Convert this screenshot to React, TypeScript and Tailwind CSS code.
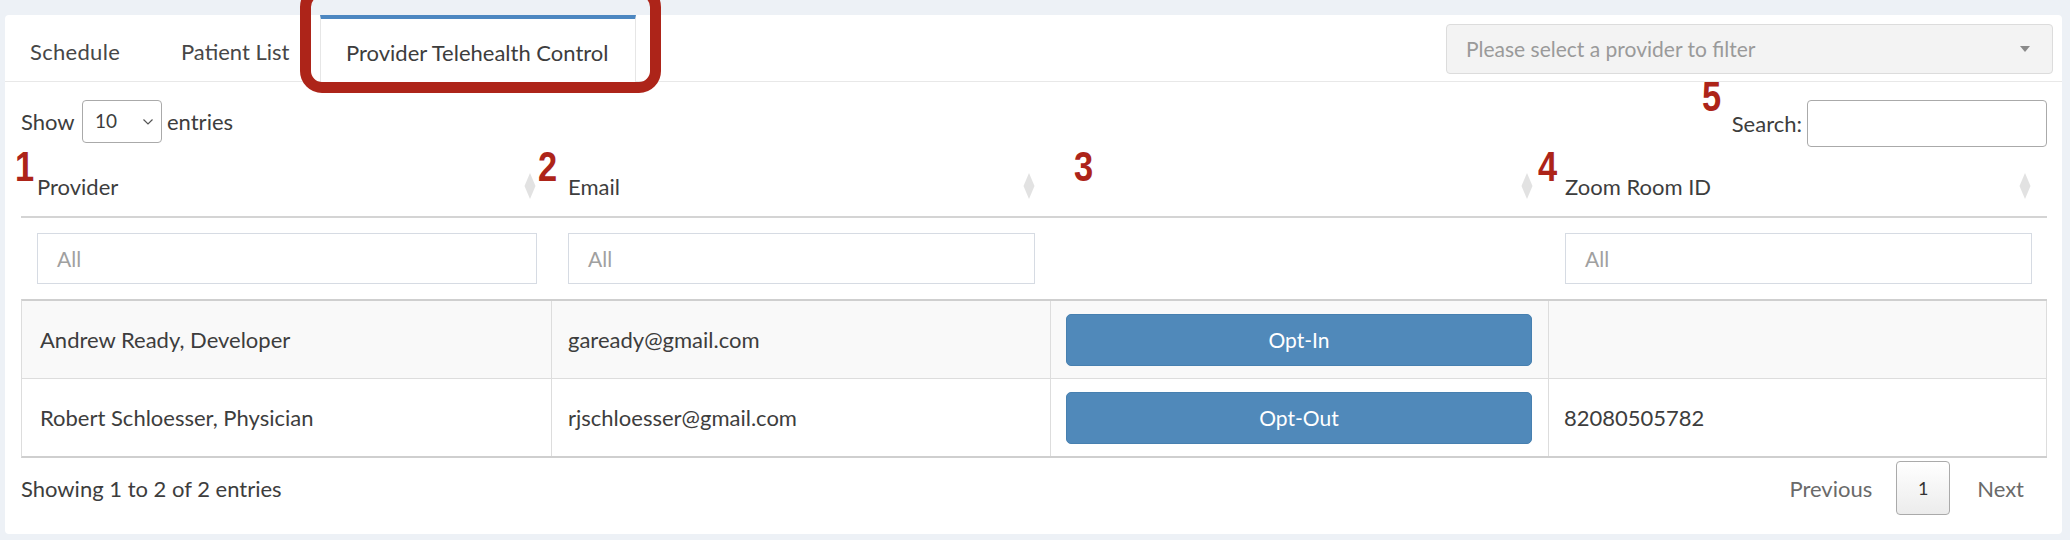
import React from "react";

const rows = [
  { name: "Andrew Ready, Developer", email: "gaready@gmail.com", action: "Opt-In", room: "" },
  { name: "Robert Schloesser, Physician", email: "rjschloesser@gmail.com", action: "Opt-Out", room: "82080505782" },
];

function SortIcon() {
  return (
    <svg width="12" height="26" viewBox="0 0 12 26" className="shrink-0">
      <path d="M6 0 L11.5 13 L6 26 L0.5 13 Z" fill="#e2e2e2" />
    </svg>
  );
}

function Mark({ n, className }: { n: string; className: string }) {
  return (
    <span
      className={`absolute text-[42px] leading-none font-bold text-[#ad2419] font-['Liberation_Sans_Narrow','Liberation_Sans',sans-serif] scale-x-[0.82] origin-left pointer-events-none ${className}`}
    >
      {n}
    </span>
  );
}

export default function App() {
  return (
    <div className="w-[2070px] h-[540px] bg-[#edf1f6] pl-[5px] pr-[8px] pt-[15px] pb-[6px] font-['Lato',sans-serif] text-[#3d3d3d] overflow-hidden">
      <div className="relative h-full bg-white rounded-[4px]">
        {/* red callout round the active tab */}
        <div className="absolute left-[295px] top-[-30px] w-[361px] h-[108px] border-[11px] border-[#ad2419] rounded-[22px] pointer-events-none z-10" />

        <div className="h-[67px] border-b border-[#e8e8e8] flex justify-between">
          <div className="flex text-[22px]">
            <div className="w-[151px] pl-[25px] pt-[7px] flex items-center text-[#474747] tracking-[0.3px]">Schedule</div>
            <div className="w-[164px] pl-[25px] pt-[7px] flex items-center text-[#474747]">Patient List</div>
            <div className="w-[316px] pl-[25px] pt-[3px] flex items-center border-t-4 border-t-[#4d87c1] border-x border-x-[#e6e6e6] bg-white mb-[-1px] relative">
              Provider Telehealth Control
            </div>
          </div>
          <div className="mt-[9px] mr-[9px] w-[607px] h-[50px] bg-[#f3f3f3] border border-[#dcdcdc] rounded-[4px] flex items-center justify-between pl-[19px] pr-[22px] text-[21px] text-[#9a9a9a]">
            <span>Please select a provider to filter</span>
            <span className="w-0 h-0 border-x-[5px] border-x-transparent border-t-[6px] border-t-[#8a8a8a]" />
          </div>
        </div>

        <div className="pl-[16px] pr-[15px]">
          <div className="mt-[18px] h-[47px] flex justify-between items-start">
            <div className="flex items-center h-[43px] text-[22px]">
              <span className="w-[61px]">Show</span>
              <div className="w-[80px] h-[43px] border border-[#aaa] rounded-[4px] flex items-center justify-between pl-[12px] pr-[7px] text-[19px]">
                <span>10</span>
                <svg width="12" height="8" viewBox="0 0 12 8">
                  <polyline points="1.5,1.5 6,6 10.5,1.5" fill="none" stroke="#555" strokeWidth="1.2" />
                </svg>
              </div>
              <span className="ml-[5px]">entries</span>
            </div>
            <div className="relative flex items-start">
              <Mark n="5" className="left-[-30px] top-[-24px]" />
              <span className="pt-[7px] text-[22px]">Search:</span>
              <div className="ml-[5px] w-[240px] h-[47px] border border-[#aaa] rounded-[4px]" />
            </div>
          </div>

          <div className="relative">
            <Mark n="1" className="left-[-6px] top-[-1px]" />
            <Mark n="2" className="left-[517px] top-[-1px]" />
            <Mark n="3" className="left-[1053px] top-[-1px]" />
            <Mark n="4" className="left-[1517px] top-[-1px]" />

            <div className="grid grid-cols-[531px_499px_498px_498px] h-[71px] border-b-2 border-[#d4d4d4] text-[22px]">
              {["Provider", "Email", "", "Zoom Room ID"].map((h, i) => (
                <div key={i} className="flex items-center justify-between pt-[9px] pl-[16px] pr-[16px]">
                  <span>{h}</span>
                  <SortIcon />
                </div>
              ))}
            </div>

            <div className="grid grid-cols-[531px_499px_498px_498px] h-[81px] items-center text-[21px]">
              <div className="pl-[16px] pr-[15px]">
                <div className="h-[51px] border border-[#d6dbe3] flex items-center pl-[19px] text-[#a0a0a0]">All</div>
              </div>
              <div className="pl-[16px] pr-[16px]">
                <div className="h-[51px] border border-[#d6dbe3] flex items-center pl-[19px] text-[#a0a0a0]">All</div>
              </div>
              <div />
              <div className="pl-[16px] pr-[15px]">
                <div className="h-[51px] border border-[#d6dbe3] flex items-center pl-[19px] text-[#a0a0a0]">All</div>
              </div>
            </div>

            <div className="border-t-2 border-b-2 border-y-[#cfcfcf] border-l border-l-[#dddddd] text-[22px]">
              {rows.map((r, i) => (
                <div
                  key={r.email}
                  className={`grid grid-cols-[530px_499px_498px_498px] ${
                    i === 0 ? "h-[78px] border-b border-[#dddddd] bg-[#f9f9f9]" : "h-[77px] bg-white"
                  }`}
                >
                  <div className="flex items-center pl-[18px] border-r border-[#dddddd]">{r.name}</div>
                  <div className="flex items-center pl-[16px] border-r border-[#dddddd]">{r.email}</div>
                  <div className="flex items-center pl-[15px] pr-[16px] border-r border-[#dddddd]">
                    <button className="w-full h-[52px] bg-[#5089ba] border border-[#4780b0] rounded-[5px] text-white text-[21px]">
                      {r.action}
                    </button>
                  </div>
                  <div className="flex items-center pl-[15px] border-r border-[#dddddd]">{r.room}</div>
                </div>
              ))}
            </div>
          </div>

          <div className="mt-[3px] h-[54px] flex justify-between items-center text-[22px]">
            <span>Showing 1 to 2 of 2 entries</span>
            <div className="flex items-center text-[#6a6a6a]">
              <span className="pr-[24px]">Previous</span>
              <span className="w-[54px] h-[54px] border border-[#aaa] rounded-[4px] bg-gradient-to-b from-white to-[#ececec] flex items-center justify-center text-[18px] text-[#333]">
                1
              </span>
              <span className="pl-[27px] pr-[23px]">Next</span>
            </div>
          </div>
        </div>
      </div>
    </div>
  );
}
